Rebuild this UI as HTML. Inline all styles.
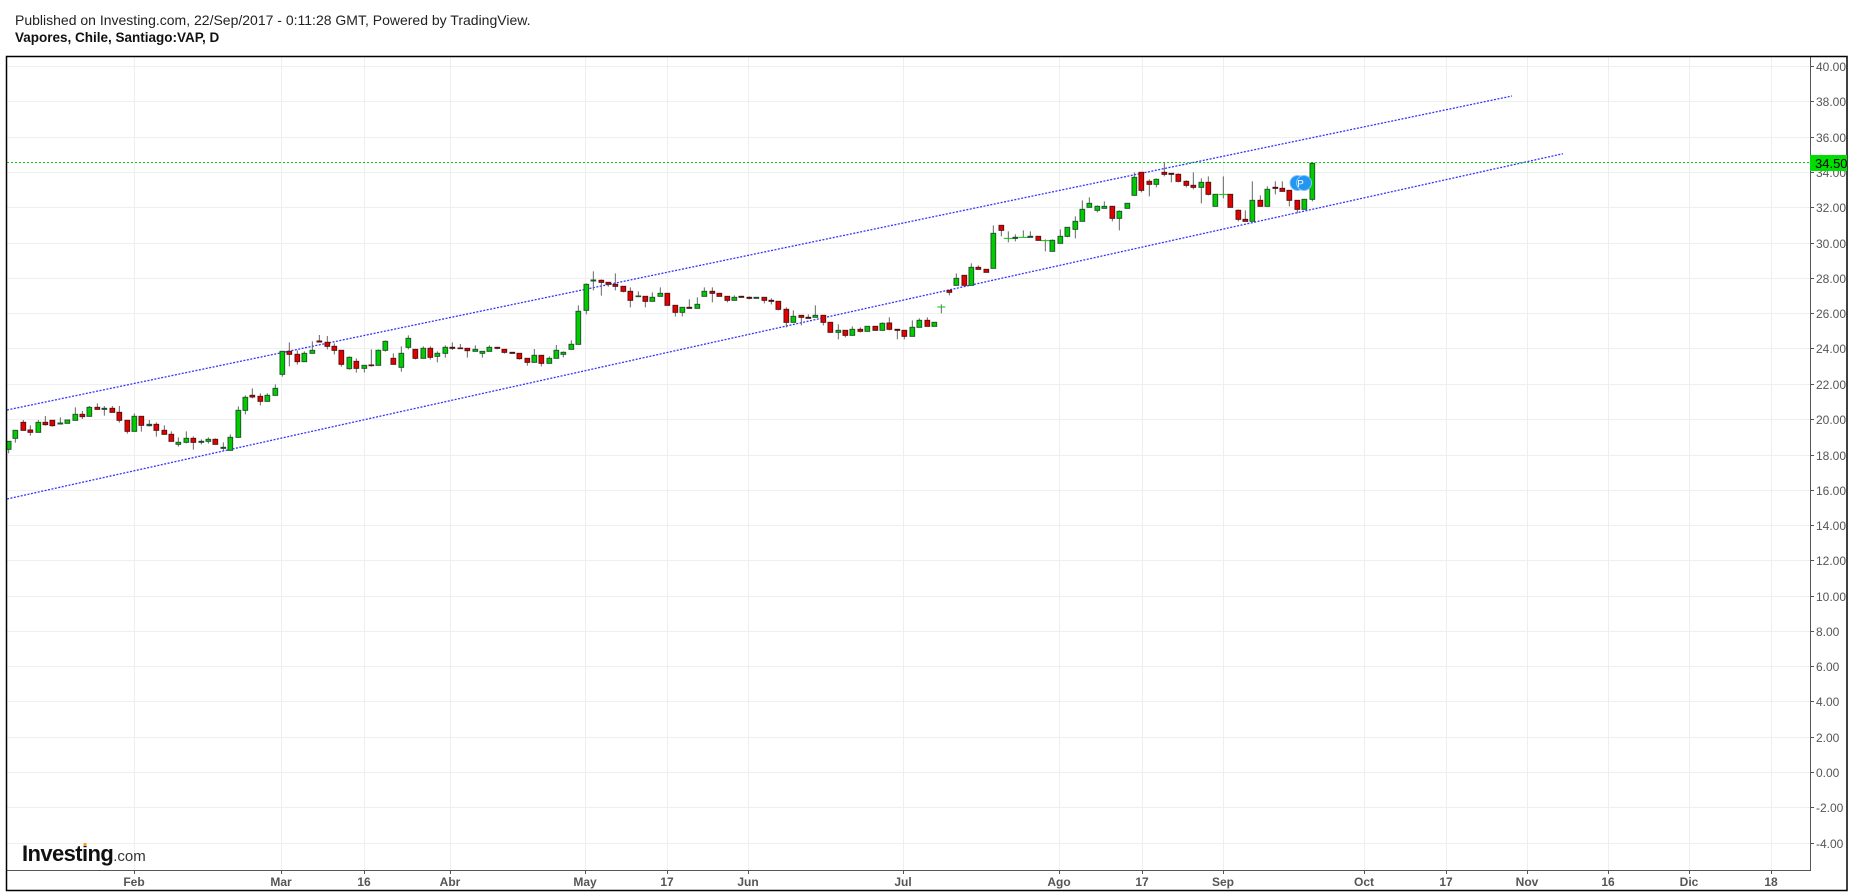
<!DOCTYPE html>
<html><head><meta charset="utf-8"><style>
html,body{margin:0;padding:0;background:#fff;width:1854px;height:894px;overflow:hidden}
svg{display:block}
.t{font-family:"Liberation Sans",Arial,sans-serif}
</style></head><body>
<svg width="1854" height="894" viewBox="0 0 1854 894" xmlns="http://www.w3.org/2000/svg">
<text class="t" x="15" y="25" font-size="14" fill="#222">Published on Investing.com, 22/Sep/2017 - 0:11:28 GMT, Powered by TradingView.</text>
<text class="t" x="15" y="42" font-size="13.5" font-weight="bold" fill="#111">Vapores, Chile, Santiago:VAP, D</text>

<!-- grid -->
<g stroke="#efefef" stroke-width="1">
<path d="M134.5 57V870M281.5 57V870M364.5 57V870M450.5 57V870M585.5 57V870M667.5 57V870M748.5 57V870M903.5 57V870M1059.5 57V870M1142.5 57V870M1223.5 57V870M1364.5 57V870M1446.5 57V870M1527.5 57V870M1608.5 57V870M1689.5 57V870M1771.5 57V870"/>
<path d="M7 66.5H1810M7 101.5H1810M7 137.5H1810M7 172.5H1810M7 207.5H1810M7 243.5H1810M7 278.5H1810M7 313.5H1810M7 348.5H1810M7 384.5H1810M7 419.5H1810M7 455.5H1810M7 490.5H1810M7 525.5H1810M7 560.5H1810M7 596.5H1810M7 631.5H1810M7 666.5H1810M7 701.5H1810M7 737.5H1810M7 772.5H1810M7 807.5H1810M7 843.5H1810"/>
</g>

<!-- channel lines -->
<g stroke="#3636ff" stroke-width="1.3" stroke-dasharray="2 1.5" fill="none">
<line x1="7" y1="410" x2="1512" y2="96"/>
<line x1="7" y1="499" x2="1563" y2="153.7"/>
</g>
<!-- price line -->
<line x1="7" y1="162.5" x2="1810" y2="162.5" stroke="#00d000" stroke-width="1" stroke-dasharray="2 2"/>

<!-- candles zone 1 -->
<g transform="translate(0,320) scale(0.33333)">
<path stroke="#666" stroke-width="3" fill="none" d="M26 364V400M46 331V368M70 300V331M91 316V347M115 300V337M136 288V317M157 301V320M181 292V312M202 300V310M226 262V301M247 273V297M268 258V289M292 250V268M313 258V287M337 258V277M358 258V308M382 301V341M403 280V334M424 289V335M448 300V320M469 307V350M493 316V343M514 334V364M535 352V380M559 334V370M580 349V389M604 358V373M625 352V371M646 355V373M670 367V391M691 343V391M715 259V352M736 226V283M757 205V235M781 220V256M802 220V244M826 193V226M847 94V170M868 67V139M892 91V134M913 94V125M937 64V100M958 45V66M982 48V88M1003 70V103M1024 91V140M1048 109V149M1069 115V158M1093 136V157M1114 88V140M1135 88V136M1156 61V95M1180 100V133M1204 79V155M1225 46V88M1246 88V118M1270 79V115M1291 79V119M1312 94V127M1336 76V113"/>
<g fill="#00cc00" stroke="#1d5a2a" stroke-width="3">
<rect x="19" y="364" width="14" height="24"/><rect x="39" y="331" width="14" height="24"/><rect x="108" y="307" width="14" height="30"/><rect x="174" y="309" width="14" height="3"/><rect x="195" y="300" width="14" height="10"/><rect x="219" y="283" width="14" height="18"/><rect x="261" y="262" width="14" height="27"/><rect x="396" y="289" width="14" height="45"/><rect x="528" y="367" width="14" height="6"/><rect x="552" y="355" width="14" height="12"/><rect x="618" y="358" width="14" height="6"/><rect x="684" y="352" width="14" height="39"/><rect x="708" y="271" width="14" height="81"/><rect x="729" y="232" width="14" height="39"/><rect x="795" y="226" width="14" height="18"/><rect x="819" y="205" width="14" height="21"/><rect x="840" y="94" width="14" height="69"/><rect x="906" y="100" width="14" height="25"/><rect x="930" y="91" width="14" height="9"/><rect x="1041" y="112" width="14" height="34"/><rect x="1086" y="136" width="14" height="9"/><rect x="1128" y="91" width="14" height="45"/><rect x="1149" y="64" width="14" height="27"/><rect x="1197" y="100" width="14" height="42"/><rect x="1218" y="55" width="14" height="27"/><rect x="1263" y="85" width="14" height="30"/><rect x="1305" y="100" width="14" height="9"/><rect x="1329" y="82" width="14" height="18"/>
</g>
<g fill="#2a5a3a" stroke="#1d4a2a" stroke-width="3">
<rect x="306" y="265" width="14" height="3"/><rect x="441" y="313" width="14" height="4"/><rect x="597" y="364" width="14" height="3"/><rect x="663" y="382" width="14" height="3"/>
</g>
<g fill="#e50000" stroke="#5b1111" stroke-width="3">
<rect x="63" y="307" width="14" height="24"/><rect x="84" y="330" width="14" height="7"/><rect x="129" y="307" width="14" height="7"/><rect x="150" y="301" width="14" height="16"/><rect x="240" y="283" width="14" height="7"/><rect x="285" y="262" width="14" height="6"/><rect x="330" y="265" width="14" height="12"/><rect x="351" y="277" width="14" height="24"/><rect x="375" y="301" width="14" height="33"/><rect x="417" y="289" width="14" height="27"/><rect x="462" y="313" width="14" height="18"/><rect x="486" y="331" width="14" height="12"/><rect x="507" y="343" width="14" height="21"/><rect x="573" y="355" width="14" height="12"/><rect x="639" y="358" width="14" height="15"/><rect x="750" y="226" width="14" height="5"/><rect x="774" y="229" width="14" height="15"/><rect x="861" y="94" width="14" height="9"/><rect x="885" y="103" width="14" height="22"/><rect x="951" y="63" width="14" height="3"/><rect x="975" y="67" width="14" height="12"/><rect x="996" y="79" width="14" height="12"/><rect x="1017" y="91" width="14" height="42"/><rect x="1062" y="124" width="14" height="21"/><rect x="1107" y="135" width="14" height="2"/><rect x="1173" y="115" width="14" height="18"/><rect x="1239" y="88" width="14" height="27"/><rect x="1284" y="85" width="14" height="27"/>
</g>
</g>

<!-- candles zone 2 -->
<g transform="translate(440,260) scale(0.33333)">
<path stroke="#666" stroke-width="3" fill="none" d="M37 247V270M61 252V266M82 265V293M106 256V274M127 274V293M148 256V274M172 262V268M193 268V281M217 277V280M238 280V299M262 295V317M283 267V307M304 286V319M328 289V310M349 255V295M370 274V292M394 241V268M415 136V253M439 70V163M460 34V91M484 58V107M505 67V80M526 40V91M550 79V97M571 82V142M595 94V110M616 109V142M637 97V124M661 82V109M682 100V136M706 136V169M727 142V169M748 118V145M772 112V145M793 82V109M817 82V127M838 100V109M862 109V127M883 106V121M904 109V112M928 109V118M949 112V115M973 112V130M994 115V133M1015 124V151M1039 142V202M1060 151V187M1084 166V196M1105 163V175M1126 136V172M1150 166V196M1171 187V217M1195 193V238M1216 211V232M1237 199V226M1261 202V217M1282 199V214M1306 199V211M1327 187V211"/>
<g fill="#00cc00" stroke="#1d5a2a" stroke-width="3">
<rect x="99" y="268" width="14" height="6"/><rect x="120" y="274" width="14" height="6"/><rect x="141" y="262" width="14" height="12"/><rect x="276" y="286" width="14" height="21"/><rect x="321" y="295" width="14" height="15"/><rect x="342" y="271" width="14" height="24"/><rect x="363" y="277" width="14" height="6"/><rect x="387" y="253" width="14" height="15"/><rect x="408" y="154" width="14" height="99"/><rect x="432" y="73" width="14" height="78"/><rect x="453" y="60" width="14" height="3"/><rect x="588" y="108" width="14" height="2"/><rect x="630" y="112" width="14" height="12"/><rect x="654" y="100" width="14" height="9"/><rect x="720" y="142" width="14" height="15"/><rect x="765" y="133" width="14" height="12"/><rect x="786" y="94" width="14" height="15"/><rect x="876" y="112" width="14" height="9"/><rect x="1053" y="169" width="14" height="18"/><rect x="1119" y="166" width="14" height="6"/><rect x="1188" y="211" width="14" height="6"/><rect x="1230" y="208" width="14" height="18"/><rect x="1275" y="199" width="14" height="15"/><rect x="1320" y="190" width="14" height="21"/>
</g>
<g fill="#2a5a3a" stroke="#1d4a2a" stroke-width="3"><rect x="942" y="112" width="14" height="3"/></g>
<g fill="#6a1a1a" stroke="#4a1010" stroke-width="3">
<rect x="30" y="262" width="14" height="3"/><rect x="210" y="277" width="14" height="3"/><rect x="741" y="142" width="14" height="3"/><rect x="897" y="109" width="14" height="3"/><rect x="921" y="112" width="14" height="3"/><rect x="987" y="121" width="14" height="3"/><rect x="1098" y="172" width="14" height="3"/>
</g>
<g fill="#e50000" stroke="#5b1111" stroke-width="3">
<rect x="54" y="264" width="14" height="2"/><rect x="75" y="265" width="14" height="7"/><rect x="165" y="262" width="14" height="3"/><rect x="186" y="268" width="14" height="9"/><rect x="231" y="280" width="14" height="16"/><rect x="255" y="295" width="14" height="12"/><rect x="297" y="286" width="14" height="24"/><rect x="477" y="61" width="14" height="6"/><rect x="498" y="67" width="14" height="6"/><rect x="519" y="73" width="14" height="6"/><rect x="543" y="79" width="14" height="15"/><rect x="564" y="94" width="14" height="27"/><rect x="609" y="109" width="14" height="15"/><rect x="675" y="100" width="14" height="36"/><rect x="699" y="136" width="14" height="21"/><rect x="810" y="94" width="14" height="6"/><rect x="831" y="100" width="14" height="9"/><rect x="855" y="109" width="14" height="12"/><rect x="966" y="112" width="14" height="9"/><rect x="1008" y="124" width="14" height="24"/><rect x="1032" y="148" width="14" height="39"/><rect x="1077" y="166" width="14" height="6"/><rect x="1143" y="166" width="14" height="21"/><rect x="1164" y="187" width="14" height="30"/><rect x="1209" y="211" width="14" height="15"/><rect x="1254" y="208" width="14" height="6"/><rect x="1299" y="199" width="14" height="12"/>
</g>
</g>

<!-- candles zone 3 -->
<g transform="translate(880,150) scale(0.33333)">
<path stroke="#666" stroke-width="3" fill="none" d="M28 502V541M52 538V568M73 541V568M97 511V559M118 505V532M142 502V529M163 517V529M184 463V490M208 421V436M229 370V406M253 376V406M274 340V406M295 346V358M319 358V367M340 226V355M364 226V259M385 244V277M406 253V274M430 241V263M451 244V262M475 259V271M496 268V304M517 268V304M541 238V280M562 232V262M586 199V265M607 151V214M628 142V172M652 166V187M673 154V175M697 169V214M718 181V241M742 160V175M763 67V136M784 67V127M808 88V139M829 85V112M853 37V79M874 70V97M895 70V97M919 91V112M940 67V118M964 85V160M985 79V136M1006 133V169M1030 79V145M1051 133V172M1075 178V214M1096 181V214M1117 94V214M1141 136V169M1162 109V169M1186 94V133M1207 94V124M1228 121V169M1252 151V190M1273 148V178M1297 37V154"/>
<path stroke="#00cc00" stroke-width="3" d="M172 471H196M371 265H399M416 262H444M482 272H510M1016 133H1044"/>
<g fill="#00cc00" stroke="#1d5a2a" stroke-width="3">
<rect x="90" y="532" width="14" height="27"/><rect x="111" y="511" width="14" height="21"/><rect x="156" y="517" width="14" height="12"/><rect x="222" y="385" width="14" height="21"/><rect x="267" y="352" width="14" height="54"/><rect x="333" y="250" width="14" height="105"/><rect x="510" y="271" width="14" height="33"/><rect x="534" y="259" width="14" height="21"/><rect x="555" y="232" width="14" height="27"/><rect x="579" y="214" width="14" height="24"/><rect x="600" y="178" width="14" height="36"/><rect x="621" y="160" width="14" height="12"/><rect x="645" y="169" width="14" height="12"/><rect x="666" y="169" width="14" height="6"/><rect x="711" y="184" width="14" height="21"/><rect x="735" y="160" width="14" height="15"/><rect x="756" y="82" width="14" height="54"/><rect x="822" y="88" width="14" height="15"/><rect x="957" y="97" width="14" height="15"/><rect x="999" y="133" width="14" height="36"/><rect x="1110" y="151" width="14" height="63"/><rect x="1155" y="118" width="14" height="51"/><rect x="1266" y="148" width="14" height="30"/><rect x="1290" y="40" width="14" height="108"/>
</g>
<g fill="#2a5a3a" stroke="#1d4a2a" stroke-width="3"><rect x="399" y="262" width="14" height="3"/><rect x="444" y="259" width="14" height="3"/></g>
<g fill="#6a1a1a" stroke="#4a1010" stroke-width="3"><rect x="45" y="538" width="14" height="3"/><rect x="867" y="70" width="14" height="3"/><rect x="1179" y="112" width="14" height="3"/></g>
<g fill="#e50000" stroke="#5b1111" stroke-width="3">
<rect x="21" y="519" width="14" height="19"/><rect x="66" y="541" width="14" height="18"/><rect x="135" y="511" width="14" height="18"/><rect x="201" y="421" width="14" height="6"/><rect x="246" y="376" width="14" height="30"/><rect x="288" y="352" width="14" height="6"/><rect x="312" y="358" width="14" height="9"/><rect x="357" y="226" width="14" height="15"/><rect x="468" y="259" width="14" height="12"/><rect x="690" y="169" width="14" height="36"/><rect x="777" y="67" width="14" height="54"/><rect x="801" y="94" width="14" height="9"/><rect x="846" y="67" width="14" height="6"/><rect x="888" y="73" width="14" height="21"/><rect x="912" y="94" width="14" height="12"/><rect x="933" y="106" width="14" height="6"/><rect x="978" y="97" width="14" height="36"/><rect x="1044" y="133" width="14" height="39"/><rect x="1068" y="181" width="14" height="27"/><rect x="1089" y="208" width="14" height="6"/><rect x="1134" y="151" width="14" height="18"/><rect x="1200" y="115" width="14" height="9"/><rect x="1221" y="121" width="14" height="30"/><rect x="1245" y="151" width="14" height="27"/>
</g>
</g>

<!-- P badges -->
<circle cx="1297.5" cy="183" r="7.5" fill="#2196f3" stroke="#8cc6f5" stroke-width="1"/>
<circle cx="1304" cy="183" r="7.5" fill="#2196f3" stroke="#8cc6f5" stroke-width="1"/>
<text class="t" x="1300.5" y="187" font-size="10" fill="#fff" text-anchor="middle">P</text>

<!-- axes & frame -->
<line x1="1810.5" y1="56" x2="1810.5" y2="871" stroke="#555" stroke-width="1"/>
<line x1="6" y1="870.5" x2="1810" y2="870.5" stroke="#555" stroke-width="1"/>
<rect x="6.5" y="56.5" width="1840.5" height="834" fill="none" stroke="#000" stroke-width="1.5"/>

<!-- price ticks -->
<g stroke="#555" stroke-width="1"><path d="M1810 66.5h4M1810 101.5h4M1810 137.5h4M1810 172.5h4M1810 207.5h4M1810 243.5h4M1810 278.5h4M1810 313.5h4M1810 348.5h4M1810 384.5h4M1810 419.5h4M1810 455.5h4M1810 490.5h4M1810 525.5h4M1810 560.5h4M1810 596.5h4M1810 631.5h4M1810 666.5h4M1810 701.5h4M1810 737.5h4M1810 772.5h4M1810 807.5h4M1810 843.5h4"/>
<path d="M134.5 870v4M281.5 870v4M364.5 870v4M450.5 870v4M585.5 870v4M667.5 870v4M748.5 870v4M903.5 870v4M1059.5 870v4M1142.5 870v4M1223.5 870v4M1364.5 870v4M1446.5 870v4M1527.5 870v4M1608.5 870v4M1689.5 870v4M1771.5 870v4"/></g>
<g class="t" font-size="12" fill="#555">
<text x="1816" y="71">40.00</text><text x="1816" y="106">38.00</text><text x="1816" y="142">36.00</text><text x="1816" y="177">34.00</text><text x="1816" y="212">32.00</text><text x="1816" y="248">30.00</text><text x="1816" y="283">28.00</text><text x="1816" y="318">26.00</text><text x="1816" y="353">24.00</text><text x="1816" y="389">22.00</text><text x="1816" y="424">20.00</text><text x="1816" y="460">18.00</text><text x="1816" y="495">16.00</text><text x="1816" y="530">14.00</text><text x="1816" y="565">12.00</text><text x="1816" y="601">10.00</text><text x="1816" y="636">8.00</text><text x="1816" y="671">6.00</text><text x="1816" y="706">4.00</text><text x="1816" y="742">2.00</text><text x="1816" y="777">0.00</text><text x="1816" y="812">-2.00</text><text x="1816" y="848">-4.00</text>
</g>
<rect x="1810" y="155" width="37" height="16" fill="#00dd00"/>
<text class="t" x="1815" y="168" font-size="13" fill="#000">34.50</text>

<g class="t" font-size="12" font-weight="bold" fill="#555" text-anchor="middle">
<text x="134" y="886">Feb</text><text x="281" y="886">Mar</text><text x="364" y="886">16</text><text x="450" y="886">Abr</text><text x="585" y="886">May</text><text x="667" y="886">17</text><text x="748" y="886">Jun</text><text x="903" y="886">Jul</text><text x="1059" y="886">Ago</text><text x="1142" y="886">17</text><text x="1223" y="886">Sep</text><text x="1364" y="886">Oct</text><text x="1446" y="886">17</text><text x="1527" y="886">Nov</text><text x="1608" y="886">16</text><text x="1689" y="886">Dic</text><text x="1771" y="886">18</text>
</g>

<!-- logo -->
<text class="t" x="22" y="861" font-size="22" font-weight="bold" fill="#111" letter-spacing="-0.6">Investing<tspan font-size="15" font-weight="normal" fill="#333" letter-spacing="0">.com</tspan></text>
<rect x="83.5" y="843" width="3" height="3" fill="#f7a21b"/>
</svg>
</body></html>
